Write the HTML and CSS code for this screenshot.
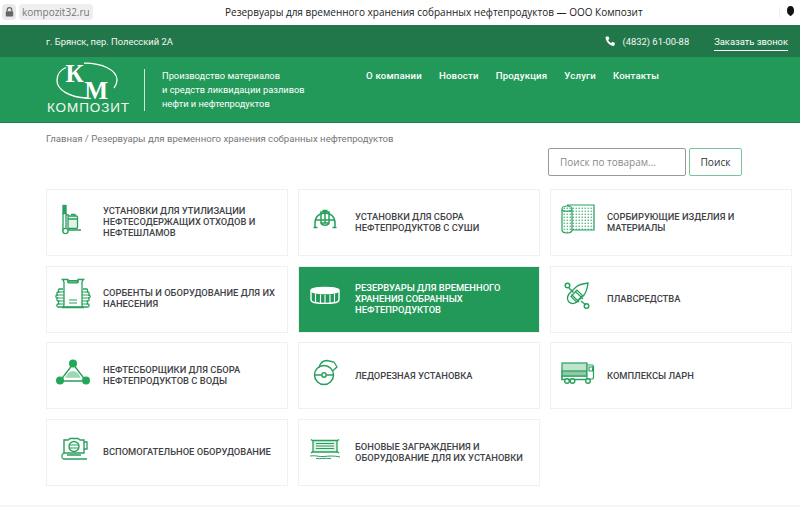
FILE: index.html
```html
<!DOCTYPE html>
<html lang="ru">
<head>
    <meta charset="UTF-8">
    <title>Резервуары для временного хранения собранных нефтепродуктов — ООО Композит</title>
    <link rel="stylesheet" href="styles.css">
</head>
<body>
    <div class="browser-bar">
        <span class="lock-chip">
            <svg width="9" height="10" viewBox="0 0 9 10"><path d="M2.2 4.5V3a2.3 2.3 0 0 1 4.6 0v1.5" fill="none" stroke="#666" stroke-width="1.2"/><rect x="0.8" y="4.2" width="7.4" height="5.4" rx="0.8" fill="#666"/></svg>
        </span>
        <span class="url-chip">kompozit32.ru</span>
        <span class="page-title">Резервуары для временного хранения собранных нефтепродуктов — ООО Композит</span>
        <span class="bar-sep"></span>
        <span class="profile-tip"></span>
    </div>

    <header>
        <div class="top-bar">
            <span class="address">г. Брянск, пер. Полесский 2А</span>
            <span class="phone">
                <svg width="11" height="11" viewBox="0 0 11 11"><path d="M1 .8 3.2.2l1.3 2.6-1.3 1.100c.5 1.300 1.600 2.500 3 3.100l1.200-1.300 2.600 1.400-.6 2.200c-.2.5-.7.7-1.200.6C4.300 9.300 1.500 6.400.5 2 .4 1.500.6 1 1 .8Z" fill="#fff"/></svg>
                (4832) 61-00-88
            </span>
            <a class="callback" href="#">Заказать звонок</a>
        </div>
        <div class="main-bar">
            <a class="logo" href="#">
                <svg width="86" height="54" viewBox="0 0 86 54">
                    <path d="M20 5.500C14 8 11 13 11 18.500 11 28 24 35.500 41 36M38 1.200C56 1 71 8 71 18c0 3-1 5.500-3 8" fill="none" stroke="#fff" stroke-width="1.300"/>
                    <text x="19.500" y="20" class="logo-letter">К</text>
                    <text x="38.500" y="36.500" class="logo-letter">М</text>
                    <text x="1" y="50" class="logo-name">КОМПОЗИТ</text>
                </svg>
            </a>
            <div class="tagline">Производство материалов<br>и средств ликвидации разливов<br>нефти и нефтепродуктов</div>
            <nav>
                <a href="#">О компании</a>
                <a href="#">Новости</a>
                <a href="#">Продукция</a>
                <a href="#">Услуги</a>
                <a href="#">Контакты</a>
            </nav>
        </div>
    </header>

    <main>
        <div class="breadcrumbs">Главная / Резервуары для временного хранения собранных нефтепродуктов</div>
        <form class="search">
            <input type="text" placeholder="Поиск по товарам...">
            <button type="button">Поиск</button>
        </form>

        <div class="catalog">
            <a class="card" href="#">
                <svg class="card-icon" viewBox="0 0 40 36" fill="none" stroke="#27a05c" stroke-width="1.300">
                    <rect x="10" y="4.500" width="3" height="8" fill="#27a05c"/>
                    <path d="M10 12v19M13 12v15M13 14h3M13 29h15"/>
                    <rect x="15" y="15" width="9.500" height="12.500" rx="1.200" fill="#e4f3ea"/>
                    <path d="M15 18h9.500M18 13.500h4v1.500"/>
                    <circle cx="12.500" cy="30" r="2.600" fill="#fff"/>
                </svg>
                <span class="card-title">Установки для утилизации нефтесодержащих отходов и нефтешламов</span>
            </a>
            <a class="card" href="#">
                <svg class="card-icon" viewBox="0 0 40 36" fill="none" stroke="#27a05c" stroke-width="1.500">
                    <path d="M10 26v-4c0-6 4-10 10-10s10 4 10 10v4"/>
                    <path d="M16 11h8v11h-8ZM20 11v11M17.500 9.500h5M16 22c1 3 7 3 8 0"/>
                    <path d="M8.500 26.500h4M27.500 26.500h4M10 19h20" stroke-width="1.300"/>
                </svg>
                <span class="card-title">Установки для сбора нефтепродуктов с суши</span>
            </a>
            <a class="card" href="#">
                <svg class="card-icon" viewBox="0 0 40 36">
                    <defs>
                        <pattern id="dots" width="3" height="3" patternUnits="userSpaceOnUse">
                            <circle cx="1.200" cy="1.200" r="0.700" fill="#27a05c"/>
                        </pattern>
                    </defs>
                    <rect x="5" y="5" width="10" height="27" rx="4" fill="url(#dots)"/>
                    <rect x="15" y="5" width="22" height="24" fill="url(#dots)"/>
                    <path d="M5 8c0-4 10-4 10 0v21c0 4-10 4-10 0ZM5 8c0 3 10 3 10 0M10 4h27v25H15" fill="none" stroke="#27a05c" stroke-width="1.200"/>
                </svg>
                <span class="card-title">Сорбирующие изделия и материалы</span>
            </a>
            <a class="card" href="#">
                <svg class="card-icon" viewBox="0 0 40 36" fill="none" stroke="#27a05c" stroke-width="1.300">
                    <path d="M9.500 2.500c1.500 1.500 1.500 2 1.500 3v22c0 1-.5 2-1 3h20c-.5-1-1-2-1-3v-22c0-1 0-1.500 1.500-3h-5.500v2.500h-10v-2.500Z"/>
                    <path d="M15 3.500h10v2.500H15ZM16 23h8M16 26h8" stroke-width="1"/>
                    <path d="M10 12H6.500c-1.500 0-1.500 3 0 3H5c-1.500 0-1.500 3 0 3H4c-1.500 0-1.500 3 0 3h1c-1.500 0-1.500 3 0 3h1.500c-1.500 0-1.500 3 0 3H5c-1.500 0-1.500 3 0 3h30c1.500 0 1.500-3 0-3h-1.500c1.500 0 1.500-3 0-3H35c1.500 0 1.500-3 0-3h1c1.500 0 1.500-3 0-3h-1c1.500 0 1.500-3 0-3h-1.500c1.500 0 1.500-3 0-3H30"/>
                    <path d="M5 15h6M4 18h7M4 21h7M5 24h6M6 27h5M29 15h6M29 18h7M29 21h7M29 24h6M29 27h5" stroke-width="1"/>
                </svg>
                <span class="card-title">Сорбенты и оборудование для их нанесения</span>
            </a>
            <a class="card card-active" href="#">
                <svg class="card-icon" viewBox="0 0 40 36" fill="none" stroke="#fff" stroke-width="1.400">
                    <ellipse cx="20" cy="13.500" rx="14" ry="3" fill="#fff"/>
                    <path d="M6 13.500v9c0 1.500 1 2.500 3 3 6 1 16 1 22 0 2-.5 3-1.500 3-3v-9"/>
                    <path d="M10.500 17v8.500M15.500 17.500v8.500M20 18v8.500M25 17.500v8.500M29.500 17v8.500" stroke-width="1.100"/>
                </svg>
                <span class="card-title">Резервуары для временного хранения собранных нефтепродуктов</span>
            </a>
            <a class="card" href="#">
                <svg class="card-icon" viewBox="0 0 40 36" fill="none" stroke="#27a05c" stroke-width="1.400">
                    <path d="M12 25c-2-2-2-5 0-8l7-7c3-2.500 8-3.500 12-4-.5 4-1.500 9-4 12l-7 7c-3 2-6 2-8 0Z"/>
                    <path d="m14.500 17.500 7.500 7.500M18 14l8 8M14 19.500l6-6.500 5.500 5.500-6 6.500Z" stroke-width="1.200"/>
                    <path d="m12 11 4.500 4.500M24 24l5 4"/>
                    <circle cx="10.500" cy="8.500" r="2.300"/>
                    <circle cx="29.500" cy="29" r="2.300"/>
                </svg>
                <span class="card-title">Плавсредства</span>
            </a>
            <a class="card" href="#">
                <svg class="card-icon" viewBox="0 0 40 36" fill="none" stroke="#27a05c" stroke-width="1.400">
                    <path d="M20 10 7 27h26Z"/>
                    <path d="M12.500 24c1-4 4-7 7.500-7s6.500 3 7.500 7Z" fill="#9fd6b5" stroke="none"/>
                    <path d="M11 24.500h18" stroke="#fff"/>
                    <circle cx="20" cy="9.500" r="4" fill="#22a858" stroke="none"/>
                    <circle cx="7" cy="26.500" r="4" fill="#22a858" stroke="none"/>
                    <circle cx="33" cy="26.500" r="4" fill="#22a858" stroke="none"/>
                </svg>
                <span class="card-title">Нефтесборщики для сбора нефтепродуктов с воды</span>
            </a>
            <a class="card" href="#">
                <svg class="card-icon" viewBox="0 0 40 36" fill="none" stroke="#27a05c" stroke-width="1.500">
                    <circle cx="19" cy="21" r="9.500"/>
                    <circle cx="19" cy="21" r="2.200"/>
                    <path d="M9.500 21h7M21.500 21h7"/>
                    <path d="M14 13.500c1-4 4-7 8-7l7 1.500 3 5-4 3.500" stroke-width="1.300"/>
                </svg>
                <span class="card-title">Ледорезная установка</span>
            </a>
            <a class="card" href="#">
                <svg class="card-icon" viewBox="0 0 40 36" fill="none" stroke="#27a05c" stroke-width="1.200">
                    <rect x="5" y="9" width="25" height="13" fill="#bfe3cd"/>
                    <rect x="5" y="17" width="25" height="5" fill="#8ccba5"/>
                    <path d="M30 11h5a1.500 1.500 0 0 1 1.500 1.500v11a1.500 1.500 0 0 1-1.500 1.500h-5ZM32 13h3.500v4H32Z" fill="#fff"/>
                    <path d="M5 22v3.500h25" stroke-width="1.600"/>
                    <circle cx="10" cy="27" r="2.300" fill="#fff" stroke-width="1.400"/>
                    <circle cx="15.500" cy="27" r="2.300" fill="#fff" stroke-width="1.400"/>
                    <circle cx="31" cy="27" r="2.300" fill="#fff" stroke-width="1.400"/>
                </svg>
                <span class="card-title">Комплексы ларн</span>
            </a>
            <a class="card" href="#">
                <svg class="card-icon" viewBox="0 0 40 36" fill="none" stroke="#27a05c" stroke-width="1.400">
                    <path d="M11 9h4l2-1.500h8l2 1.500h4v13H11Z"/>
                    <circle cx="21" cy="15.500" r="5"/>
                    <path d="M16 14h10M16 17h10" stroke-width="1.100"/>
                    <path d="M31 11h3v7h-3M14 24h14M11 22c-2.500 1-3 4.500-.5 6H34" stroke-width="1.300"/>
                </svg>
                <span class="card-title">Вспомогательное оборудование</span>
            </a>
            <a class="card" href="#">
                <svg class="card-icon" viewBox="0 0 40 36" fill="none" stroke="#27a05c" stroke-width="1.300">
                    <path d="M8 9.500h24V21H8Z" fill="#dff1e6"/>
                    <path d="M6 8.500l2 1.500M34 8.500l-2 1.500M6 22l2-1.500M34 22l-2-1.500"/>
                    <path d="M11 12.500h18M11 15h18M11 17.500h18" stroke-width="1"/>
                    <path d="M5 25c5-1 9 1 14 .5s10-1 16 .5M11 27.500c4 .5 9-.5 15 0" stroke-width="1"/>
                </svg>
                <span class="card-title">Боновые заграждения и оборудование для их установки</span>
            </a>
        </div>
    </main>
    <footer></footer>
</body>
</html>
```

FILE: styles.css
```css
* {
    box-sizing: border-box;
}
html, body {
    margin: 0;
    height: 507px;
    overflow: hidden;
}
body {
    font-family: Roboto, "Liberation Sans", sans-serif;
    background-color: #fff;
    color: #333;
    display: flex;
    flex-direction: column;
}
a {
    text-decoration: none;
}

/* Строка браузера */
.browser-bar {
    height: 25px;
    flex: none;
    display: flex;
    align-items: center;
    padding: 0 0 1px 2px;
    font-family: "Open Sans", sans-serif;
}
.lock-chip {
    width: 14px;
    height: 16px;
    border-radius: 4px;
    background-color: #e9e9e9;
    display: flex;
    align-items: center;
    justify-content: center;
    margin-right: 3px;
}
.url-chip {
    width: 74px;
    height: 16px;
    border-radius: 4px;
    background-color: #efefef;
    color: #777;
    font-size: 10px;
    line-height: 16px;
    padding-left: 3px;
    white-space: nowrap;
}
.page-title {
    margin-left: 132px;
    font-size: 10px;
    color: #222;
    white-space: nowrap;
}
.bar-sep {
    width: 1px;
    height: 11px;
    background-color: #eee;
    margin-left: auto;
}
.profile-tip {
    width: 7px;
    height: 9px;
    margin: 0 6px 4px 7px;
    background-color: #111;
    border-radius: 50%;
    box-shadow: 0 3px 0 -2px #111;
}

/* Шапка */
.top-bar {
    height: 32px;
    background-color: #22774a;
    color: #f4f8f5;
    font-size: 9.400px;
    display: flex;
    align-items: center;
    padding-left: 46px;
}
.phone {
    margin-left: auto;
    display: flex;
    align-items: center;
    gap: 6px;
}
.callback {
    color: #fff;
    margin: 0 12px 0 25px;
    padding: 4px 0 3px;
    border-bottom: 1px solid #fff;
}
.main-bar {
    height: 66px;
    background-color: #239959;
    border-bottom: 1px solid #1d8048;
    color: #fff;
    display: flex;
    align-items: flex-start;
    padding-left: 46px;
}
.logo {
    width: 98px;
    height: 54px;
    margin-top: 5px;
    display: block;
}
.logo-letter {
    font-family: "Liberation Serif", serif;
    font-weight: bold;
    font-size: 25px;
    fill: #fff;
}
.logo-name {
    font-family: "Liberation Sans", sans-serif;
    font-size: 13.500px;
    letter-spacing: 0.900px;
    fill: #f2f8f4;
}
.tagline {
    margin-top: 12px;
    height: 42px;
    border-left: 1px solid #cfe6d8;
    padding-left: 17px;
    font-size: 9.300px;
    line-height: 14px;
    width: 222px;
}
nav {
    display: flex;
    gap: 17px;
    margin-top: 13px;
}
nav a {
    color: #fff;
    font-size: 9.600px;
    font-weight: 500;
    letter-spacing: 0.200px;
}

/* Основная часть */
main {
    flex: 1;
    padding: 9px 0 0 46px;
}
.breadcrumbs {
    font-size: 9.600px;
    line-height: 13px;
    color: #777;
}
.search {
    display: flex;
    gap: 3px;
    margin: 3px 0 13px 502px;
}
.search input {
    width: 138px;
    height: 28px;
    border: 1px solid #999;
    border-radius: 2px;
    padding: 0 11px;
    font-family: "Open Sans", sans-serif;
    font-size: 10px;
}
.search input::placeholder {
    color: #8a8a8a;
}
.search button {
    width: 53px;
    height: 28px;
    background-color: #fff;
    border: 1px solid #7cc49b;
    border-radius: 2px;
    color: #333;
    font-family: "Open Sans", sans-serif;
    font-size: 10.200px;
}
.catalog {
    display: grid;
    grid-template-columns: repeat(3, 242px);
    grid-auto-rows: 67px;
    gap: 9.700px 10px;
}
.card {
    display: flex;
    align-items: center;
    gap: 10px;
    padding-left: 6px;
    border: 1px solid #f0f0f0;
    color: #3f4347;
}
.card-active {
    background-color: #239959;
    color: #fff;
}
.card-icon {
    width: 40px;
    height: 36px;
    flex: none;
    margin-bottom: 8px;
}
.card-title {
    font-size: 9.350px;
    font-weight: 500;
    line-height: 10.700px;
    text-transform: uppercase;
}
footer {
    height: 2px;
    flex: none;
    background-color: #f1f9f5;
}
```
